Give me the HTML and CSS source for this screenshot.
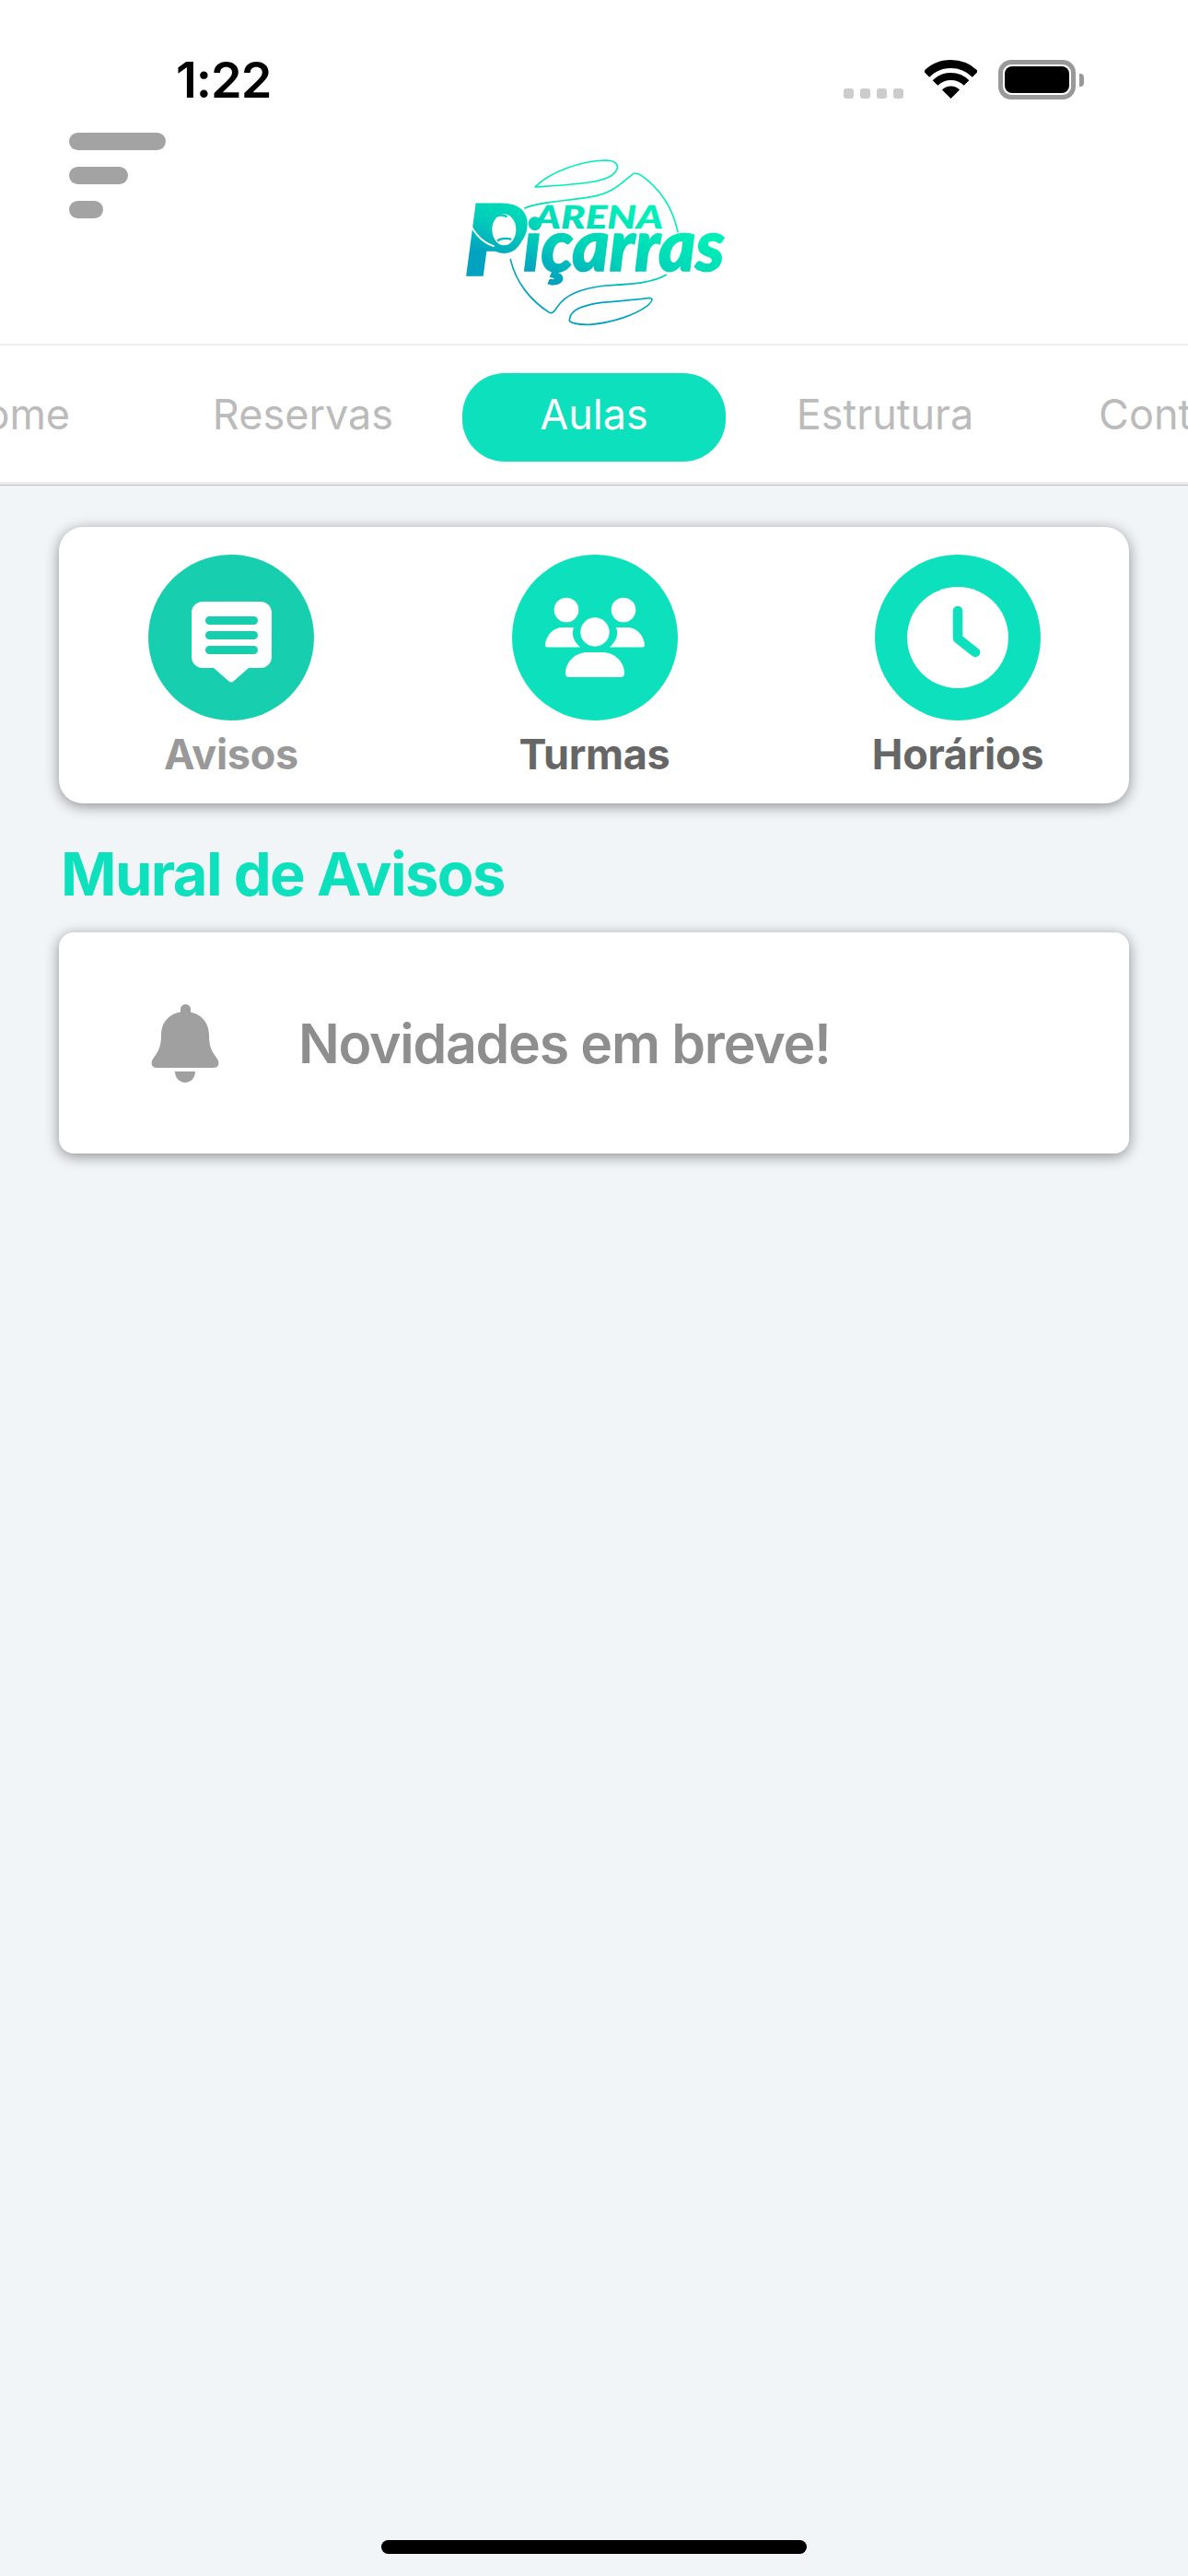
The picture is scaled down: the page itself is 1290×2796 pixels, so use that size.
FILE: index.html
```html
<!DOCTYPE html>
<html lang="pt-BR">
<head>
    <meta charset="UTF-8">
    <meta name="viewport" content="width=device-width, initial-scale=1.0">
    <title>Arena Piçarras - Aulas</title>
    <link rel="stylesheet" href="styles.css">
</head>
<body>
    <div class="page">
        <header class="header">
            <div class="statusbar">
                <span class="time">1:22</span>
                <div class="status-icons">
                    <div class="signal"><i></i><i></i><i></i><i></i></div>
                    <svg class="wifi" width="57" height="42" viewBox="0 0 57 42">
                        <path d="M2 15.5A37.5 37.5 0 0 1 55 15.5" fill="none" stroke="#000" stroke-width="9"/>
                        <path d="M11.5 25A24 24 0 0 1 45.5 25" fill="none" stroke="#000" stroke-width="8"/>
                        <path d="M28.5 42L19 32.5A13.5 13.5 0 0 1 38 32.5Z" fill="#000"/>
                    </svg>
                    <div class="battery"><div class="battery-level"></div></div>
                    <div class="battery-cap"></div>
                </div>
            </div>
            <div class="topbar">
                <div class="menu-btn"><i></i><i></i><i></i></div>
                <svg class="logo" width="380" height="220" viewBox="0 0 1140 660">
                    <defs>
                        <linearGradient id="logoGrad" gradientUnits="userSpaceOnUse" x1="660" y1="210" x2="560" y2="490">
                            <stop offset="0" stop-color="#00efb8"/>
                            <stop offset="0.6" stop-color="#00cfb9"/>
                            <stop offset="1" stop-color="#00a2c0"/>
                        </linearGradient>
                    </defs>
                    <g fill="none" stroke="url(#logoGrad)" stroke-width="5" stroke-linecap="round">
                        <path d="M425 157C470 110 570 75 650 72C695 72 700 95 680 115C650 145 560 150 440 158C425 160 420 158 425 157Z"/>
                        <path d="M390 228C440 205 530 205 610 190C670 180 700 150 735 122C745 110 755 112 770 122C830 165 870 220 888 305"/>
                        <path d="M343 395C360 470 410 530 470 568C480 572 485 565 495 550C520 510 570 490 650 480C720 475 800 475 850 445"/>
                        <path d="M535 590C540 560 570 545 640 535C700 530 760 525 795 520C810 522 805 530 790 545C750 575 680 600 600 607C560 608 530 600 535 590Z"/>
                    </g>
                    <g class="logo-text" fill="url(#logoGrad)" stroke="url(#logoGrad)">
                        <text class="logo-p" x="190" y="448" textLength="205" lengthAdjust="spacingAndGlyphs">P</text>
                        <text class="logo-arena" x="420" y="295" textLength="420" lengthAdjust="spacingAndGlyphs">ARENA</text>
                        <text class="logo-name" x="385" y="432" textLength="655" lengthAdjust="spacingAndGlyphs">içarras</text>
                    </g>
                    <!-- bowl of the P is a tennis ball -->
                    <ellipse cx="322" cy="298" rx="52" ry="64" fill="#fff" stroke="url(#logoGrad)" stroke-width="26"/>
                    <path d="M284 262C296 248 320 248 332 256M300 334C312 326 334 324 346 330" fill="none" stroke="url(#logoGrad)" stroke-width="7"/>
                    <path d="M207 272C225 310 250 340 290 352" fill="none" stroke="#fff" stroke-width="6"/>
                </svg>
            </div>
        </header>

        <nav class="tabs">
            <div class="tab">Home</div>
            <div class="tab">Reservas</div>
            <div class="tab active">Aulas</div>
            <div class="tab">Estrutura</div>
            <div class="tab">Contato</div>
        </nav>

        <main class="content">
            <section class="card shortcuts">
                <div class="shortcut">
                    <div class="circle selected">
                        <svg width="180" height="180" viewBox="0 0 180 180">
                            <path d="M59 51H122A12 12 0 0 1 134 63V111A12 12 0 0 1 122 123H109L93 137Q90 140 87 137L71 123H59A12 12 0 0 1 47 111V63A12 12 0 0 1 59 51Z" fill="#fff"/>
                            <rect x="62" y="67" width="57" height="9" rx="4.5" fill="#17ceae"/>
                            <rect x="62" y="83" width="57" height="9" rx="4.5" fill="#17ceae"/>
                            <rect x="62" y="99" width="57" height="9" rx="4.5" fill="#17ceae"/>
                        </svg>
                    </div>
                    <span class="shortcut-label muted">Avisos</span>
                </div>
                <div class="shortcut">
                    <div class="circle">
                        <svg width="180" height="180" viewBox="0 0 180 180" fill="#fff">
                            <circle cx="59" cy="60" r="13.3"/>
                            <circle cx="121" cy="60" r="13.3"/>
                            <circle cx="90" cy="84" r="15.7"/>
                            <path d="M36 98C37 87 45 79 55 79H67C64 87 67 94 74 100.5H38C36.500 100.500 36 99.500 36 98Z"/>
                            <path d="M144 98C143 87 135 79 125 79H113C116 87 113 94 106 100.5H142C143.500 100.500 144 99.500 144 98Z"/>
                            <path d="M58 129C58 116 69 106 82 106H98C111 106 122 116 122 129C122 132 120 133 118 133H62C60 133 58 132 58 129Z"/>
                        </svg>
                    </div>
                    <span class="shortcut-label">Turmas</span>
                </div>
                <div class="shortcut">
                    <div class="circle">
                        <svg width="180" height="180" viewBox="0 0 180 180">
                            <circle cx="90" cy="90" r="55" fill="#fff"/>
                            <path d="M90 61V91L109 106" fill="none" stroke="#0de0bc" stroke-width="10.500" stroke-linecap="round" stroke-linejoin="round"/>
                        </svg>
                    </div>
                    <span class="shortcut-label">Horários</span>
                </div>
            </section>

            <h2 class="section-title">Mural de Avisos</h2>

            <section class="card notice">
                <svg class="bell" width="74" height="85" viewBox="0 0 74 85" fill="#a0a0a0">
                    <rect x="32" y="0" width="11" height="14" rx="5.500"/>
                    <path d="M37 8C23 8 11.500 17 11 33C11 44 9 50 3 58C-1 63 0 69 6 69H68C74 69 75 63 71 58C65 50 63 44 63 33C62.500 17 51 8 37 8Z"/>
                    <path d="M26 73H48C48 80 43 85 37 85C31 85 26 80 26 73Z"/>
                </svg>
                <span class="notice-text">Novidades em breve!</span>
            </section>
        </main>

        <div class="homebar"></div>
    </div>
</body>
</html>
```
FILE: styles.css
```css
* {
    box-sizing: border-box;
}
body {
    margin: 0;
    font-family: Inter, "Liberation Sans", sans-serif;
    background-color: #f1f5f8;
}
.page {
    width: 1290px;
    height: 2796px;
    overflow: hidden;
    display: flex;
    flex-direction: column;
}

/* status bar */
.header {
    background: white;
}
.statusbar {
    height: 144px;
    display: flex;
    justify-content: space-between;
    align-items: flex-start;
    padding: 56px 113px 0 191px;
}
.time {
    font-size: 54px;
    line-height: 62px;
    font-weight: 600;
    color: black;
    letter-spacing: -1px;
}
.status-icons {
    display: flex;
    align-items: flex-start;
    padding-top: 9px;
}
.signal {
    display: flex;
    gap: 7px;
    margin-top: 31px;
    margin-right: 23px;
}
.signal i {
    display: block;
    width: 11px;
    height: 11px;
    background: #ccc;
    border-radius: 3px;
}
.wifi {
    margin-right: 23px;
}
.battery {
    width: 84px;
    height: 43px;
    padding: 2px;
    border: 5px solid #999;
    border-radius: 14px;
}
.battery-level {
    width: 100%;
    height: 100%;
    background: black;
    border-radius: 8px;
}
.battery-cap {
    width: 5px;
    height: 14px;
    margin: 15px 0 0 4px;
    background: #999;
    border-radius: 0 4px 4px 0;
}

/* menu and logo */
.topbar {
    height: 229px;
    display: grid;
    grid-template-columns: 440px 380px 1fr;
}
.menu-btn {
    grid-column: 1;
    padding-left: 75px;
    display: flex;
    flex-direction: column;
    gap: 18px;
}
.menu-btn i {
    display: block;
    height: 19px;
    background: #a3a3a3;
    border-radius: 10px;
}
.menu-btn i:nth-child(1) {
    width: 105px;
}
.menu-btn i:nth-child(2) {
    width: 64px;
}
.menu-btn i:nth-child(3) {
    width: 37px;
}
.logo {
    grid-column: 2;
    margin-top: 6px;
}
.logo-text {
    font-family: Lato, Inter, sans-serif;
    font-weight: 900;
    font-style: italic;
    stroke-width: 5px;
}
.logo-p {
    font-size: 320px;
}
.logo-arena {
    font-size: 104px;
    stroke-width: 1px;
}
.logo-name {
    font-size: 236px;
}

/* tabs */
.tabs {
    display: flex;
    justify-content: center;
    gap: 30px;
    padding: 30px 0 22px;
    background: white;
    border-top: 2px solid #eee;
    border-bottom: 3px solid #ececec;
    box-shadow: 0 1px 1px rgba(0, 0, 0, 0.2);
    overflow: hidden;
}
.tab {
    flex: 0 0 286px;
    height: 96px;
    line-height: 90px;
    border-radius: 46px;
    text-align: center;
    font-size: 45px;
    color: #bbb;
}
.tab.active {
    background: #0de0bc;
    color: white;
}

/* content */
.content {
    padding: 46px 64px 0;
}
.card {
    background: white;
    box-shadow: 0 3px 15px rgba(0, 0, 0, 0.42);
}
.shortcuts {
    height: 300px;
    padding: 30px 96px 0 97px;
    border-radius: 26px;
    display: flex;
    justify-content: space-between;
}
.shortcut {
    width: 180px;
    display: flex;
    flex-direction: column;
    align-items: center;
}
.circle {
    width: 180px;
    height: 180px;
    background: #0de0bc;
    border-radius: 50%;
}
.circle svg {
    display: block;
}
.circle.selected {
    background: #17ceae;
}
.shortcut-label {
    margin-top: 10px;
    font-size: 45px;
    line-height: 54px;
    font-weight: 700;
    color: #666;
    white-space: nowrap;
    letter-spacing: -0.3px;
}
.shortcut-label.muted {
    color: #999;
}
.section-title {
    margin: 0;
    padding: 39px 2px 26px;
    font-size: 65px;
    line-height: 75px;
    font-weight: 700;
    color: #0de0bc;
    letter-spacing: -1.6px;
}
.notice {
    height: 240px;
    padding-left: 100px;
    border-radius: 16px;
    display: flex;
    align-items: center;
    gap: 86px;
}
.notice-text {
    font-size: 59px;
    font-weight: 600;
    color: #8e8e8e;
    letter-spacing: -1.3px;
}

.homebar {
    width: 462px;
    height: 15px;
    margin: auto auto 24px;
    background: black;
    border-radius: 8px;
}
```
